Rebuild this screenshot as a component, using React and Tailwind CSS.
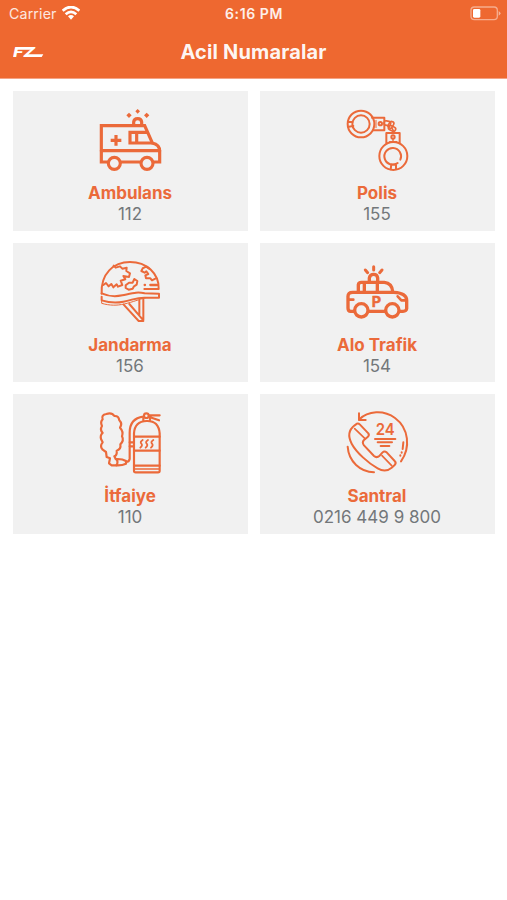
function Icon({ children, width = 6 }) {
  return (
    <svg
      viewBox="0 0 270 240"
      className="mr-px h-20 w-[90px] text-[#eb6a3a]"
      fill="none"
      stroke="currentColor"
      strokeWidth={width}
      strokeLinecap="round"
      strokeLinejoin="round"
    >
      {children}
    </svg>
  );
}

function AmbulanceIcon() {
  return (
    <Icon width={9.5}>
      <path d="M69 186H49V77H179L202 129Q224 134 224 153V186H205M107 186H166" strokeLinejoin="miter" />
      <path d="M49 152H224" />
      <path d="M202 129H135V97H185M155 97V129" strokeLinejoin="miter" />
      <circle cx="88" cy="190" r="18" />
      <circle cx="186" cy="190" r="18" />
      <path d="M93 105V137M77 121H109" strokeLinecap="butt" />
      <path d="M146 76V66Q147 56 158 56T170 66V76" />
      <g fill="currentColor" stroke="none">
        <path d="M158 27l7 7-7 7-7-7zM132 38l8 8-8 8-8-8zM185 38l8 8-8 8-8-8z" />
      </g>
    </Icon>
  );
}

function HandcuffsIcon() {
  return (
    <Icon width={6}>
      <circle cx="87" cy="72" r="40" />
      <circle cx="87" cy="72" r="26" />
      <path d="M49 66H61M50 80L64 78" />
      <circle cx="184" cy="168" r="42" />
      <path d="M205 179A25 25 0 1 0 197 189M176 208L178 193L192 194V207" />
      <path d="M120 53H157V91H123" />
      <path d="M132 61V83" strokeWidth="3" />
      <circle cx="145" cy="71" r="5" />
      <path d="M163 128V99H203V129" />
      <circle cx="183" cy="111" r="5" />
      <path d="M183 116V123M173 125H194" strokeWidth="4" />
      <g strokeWidth="5">
        <rect x="156" y="63" width="20" height="13" rx="6" transform="rotate(12 165 70)" />
        <rect x="167" y="68" width="21" height="13" rx="6" transform="rotate(-60 177 75)" />
        <rect x="169" y="79" width="22" height="13" rx="6" transform="rotate(24 180 86)" />
        <path d="M180 84L187 99" />
      </g>
    </Icon>
  );
}

function HelmetIcon() {
  return (
    <Icon width={6}>
      <path d="M50 125C47 65 85 30 135 30S223 65 221 111H178" />
      <path d="M50 124C70 133 93 134 112 130C145 123 156 119 179 124L222 125V137H181C156 136 145 143 115 149C91 154 69 151 50 145V134" />
      <path d="M50 143V154C75 161 95 161 118 156C147 149 159 143 183 137" strokeWidth="3" />
      <path d="M55 99L63 93L71 103L79 96L85 106L95 97L99 104L112 99L107 86L121 82L115 72L132 75L135 64L124 57L125 47L112 50L105 43L92 47L86 41" />
      <path d="M122 100L132 92L143 92L148 81L157 87L155 98L147 103L143 110L131 113L122 108Z" />
      <path d="M173 49L183 44L193 50M173 49L169 57L179 62L184 58L190 66L181 70L183 79L196 79L201 85L211 80" />
      <path d="M179 99h1M196 99H217" strokeWidth="7" />
      <path d="M116 158L161 207H175V142M163 145V191L133 156M163 191L175 205" />
    </Icon>
  );
}

function PoliceCarIcon() {
  return (
    <Icon width={10}>
      <path d="M67 178H56Q48 178 48 168V133Q48 121 62 121H186Q224 123 224 145V170Q223 178 213 178H204M111 178H159" />
      <circle cx="88" cy="175" r="20" />
      <circle cx="181" cy="175" r="20" />
      <path d="M79 120V98Q80 91 88 91H157Q180 93 182 119M97 92V120M136 92V120" />
      <path d="M112 89V78Q114 67 125 67T137 78V89" />
      <path d="M125 44V54M100 54L107 62M150 54L143 62" strokeWidth="9" />
      <path d="M49 143H64M222 145H208L197 133" strokeWidth="8" />
      <text
        x="119"
        y="164"
        className="font-['Inter'] font-bold"
        fontSize="43"
        fill="currentColor"
        strokeWidth="1.5"
      >
        P
      </text>
    </Icon>
  );
}

function ExtinguisherIcon() {
  return (
    <Icon width={6.5}>
      <path d="M147 203V91Q149 55 185 54T224 91V203Q224 208 219 208H152Q147 208 147 203Z" />
      <path d="M147 101H224M147 143H224M147 188H224" />
      <path d="M149 198H222" strokeWidth="4" />
      <path d="M175 52V46M195 52V46" />
      <circle cx="184" cy="38" r="7" />
      <path d="M193 37L224 37M193 42L222 52M175 41C146 45 134 62 134 89V168Q132 177 123 177" />
      <path d="M134 118H145M134 130H145" />
      <path d="M94 168Q112 167 123 174V182Q111 188 94 187Q101 177 94 168Z" />
      <path d="M80 187L72 181L75 166L65 162L63 147L53 140Q43 130 53 118L48 108Q45 96 53 90Q44 80 51 69Q45 57 53 49Q48 36 64 33Q80 27 88 39Q101 38 103 52Q113 62 105 74Q116 85 111 100Q118 113 106 124Q109 139 95 143Q97 157 88 160L92 168M80 187H94" />
      <path
        d="M173 111q-9 6-4 11t-3 12M189 111q-9 6-4 11t-3 12M205 111q-9 6-4 11t-3 12"
        strokeWidth="5.5"
      />
    </Icon>
  );
}

function SwitchboardIcon() {
  return (
    <Icon width={6}>
      <path d="M81 50C108 23 155 20 189 45C231 76 236 134 207 175" />
      <path d="M81 31V51H101" />
      <path d="M47 131C50 176 85 207 126 208" />
      <path d="M68 67L75 62Q79 60 84 65L109 91Q113 97 107 102L96 111Q89 118 96 127L126 159Q134 166 143 158L151 149Q157 143 164 148L188 174Q194 180 188 186L179 194Q160 210 137 196C109 181 73 148 59 122Q41 88 68 67Z" />
      <path d="M68 77L99 107M150 158L179 188" strokeWidth="5" />
      <path d="M129 108H190M137 118H180M146 129H172" strokeWidth="6" />
      <path d="M214 118L212 138M209 148v1M205 157v1" />
      <text
        x="131"
        y="96"
        className="font-['Inter'] font-semibold"
        fontSize="48"
        textLength="57"
        lengthAdjust="spacingAndGlyphs"
        fill="currentColor"
        stroke="none"
      >
        24
      </text>
    </Icon>
  );
}

const numbers = [
  { name: 'Ambulans', phone: '112', icon: AmbulanceIcon },
  { name: 'Polis', phone: '155', icon: HandcuffsIcon },
  { name: 'Jandarma', phone: '156', icon: HelmetIcon },
  { name: 'Alo Trafik', phone: '154', icon: PoliceCarIcon },
  { name: 'İtfaiye', phone: '110', icon: ExtinguisherIcon },
  { name: 'Santral', phone: '0216 449 9 800', icon: SwitchboardIcon },
];

function StatusBar() {
  return (
    <div className="grid h-[27px] grid-cols-[1fr_auto_1fr] items-center pr-[6px] pl-[7px]">
      <div className="flex items-center gap-[5px] pl-[2px]">
        <span className="text-[14.2px] tracking-[0.15px] text-white/85">Carrier</span>
        <svg viewBox="0 0 54 42" className="h-[14px] w-[18px]" fill="none" stroke="white" strokeWidth="8">
          <path d="M2 14Q27-8 52 14M11 25Q27 10 43 25" />
          <path d="M18 31Q27 23 36 31L27 41Z" fill="white" stroke="none" />
        </svg>
      </div>
      <span className="text-center text-[14px] font-semibold tracking-[0.6px] text-white/90">6:16 PM</span>
      <svg viewBox="0 0 93 45" className="h-[15px] w-[31px] justify-self-end" fill="none">
        <rect x="3" y="3" width="79" height="38" rx="10" stroke="white" strokeOpacity="0.45" strokeWidth="4" />
        <rect x="9" y="9" width="22" height="26" rx="4" fill="white" />
        <path d="M86 15Q97 22 86 29Z" fill="white" fillOpacity="0.5" />
      </svg>
    </div>
  );
}

function Logo() {
  return (
    <svg viewBox="0 0 105 54" className="h-[18px] w-[35px]" fill="white">
      <text
        x="0"
        y="42"
        className="font-['Inter'] font-extrabold italic"
        fontSize="41"
        textLength="66"
        lengthAdjust="spacingAndGlyphs"
      >
        FZ
      </text>
      <path d="M10 12H62L58 20H5Z" />
      <path d="M43 34H91L86 42H38Z" />
    </svg>
  );
}

export default function App() {
  return (
    <div className="h-[900px] bg-white font-['Inter',sans-serif]">
      <header className="h-[79px] border-b border-[#f4a385] bg-[#ee6830]">
        <StatusBar />
        <div className="grid h-[50px] grid-cols-[1fr_auto_1fr] items-center px-[13px]">
          <Logo />
          <h1 className="text-[20px] leading-6 font-bold tracking-[0.15px] text-white/95">Acil Numaralar</h1>
        </div>
      </header>

      <main className="grid grid-cols-2 gap-3 px-[13px] pt-3 pr-3">
        {numbers.map(({ name, phone, icon: NumberIcon }) => (
          <div key={name} className="flex h-[139.5px] flex-col items-center bg-[#f1f1f1] pt-[9px]">
            <NumberIcon />
            <span className="mt-[3px] mr-px text-[17px] leading-[21px] font-bold text-[#eb6a3a]">{name}</span>
            <span className="mr-px text-[17px] leading-[21px] text-[#73777a]">{phone}</span>
          </div>
        ))}
      </main>
    </div>
  );
}
